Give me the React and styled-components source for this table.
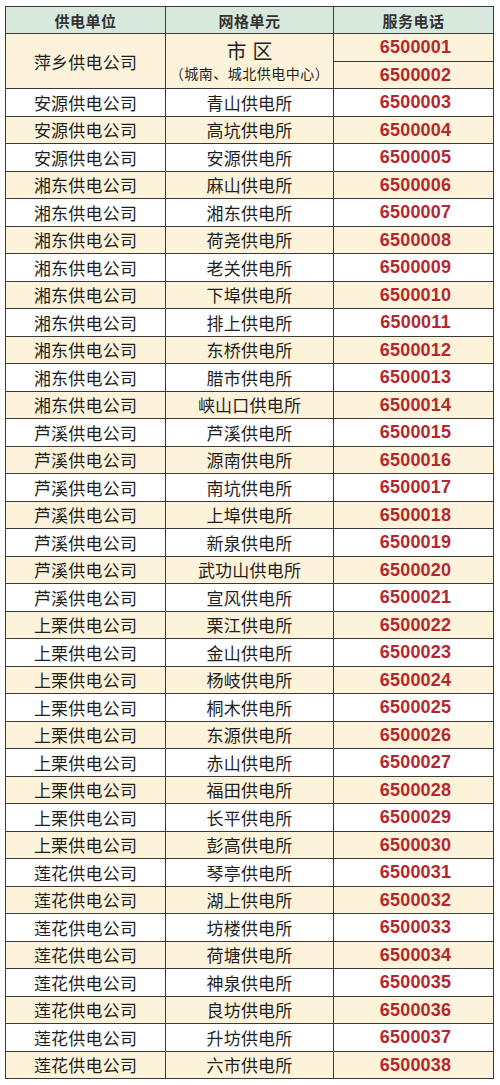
import React from 'react';
import styled, { createGlobalStyle } from 'styled-components';

const GlobalStyle = createGlobalStyle`
  html, body {
    margin: 0;
    padding: 0;
    background: #ffffff;
  }
  body {
    font-family: "Noto Sans CJK SC", "Noto Sans", sans-serif;
  }
`;

const Page = styled.div`
  width: 500px;
  padding: 6px 7px 7px 5px;
  box-sizing: border-box;
`;

const Table = styled.table`
  width: 488px;
  border-collapse: collapse;
  table-layout: fixed;
  border: 1.5px solid #3a3a3a;
`;

const HeadCell = styled.th`
  height: 26px;
  padding: 0;
  background: #d7e8dc;
  border: 1.5px solid #3a3a3a;
  font-size: 15px;
  font-weight: 700;
  letter-spacing: 0.5px;
  color: #333333;
  text-align: center;
  vertical-align: middle;
`;

const Row = styled.tr`
  background: ${({ $cream }) => ($cream ? '#fcf3da' : '#ffffff')};
`;

const Cell = styled.td`
  height: 26.5px;
  padding: 0;
  border: 1px solid #3a3a3a;
  font-size: 17px;
  letter-spacing: 0.2px;
  color: #1f1f1f;
  text-align: center;
  vertical-align: middle;
  line-height: 1;
`;

const Phone = styled(Cell)`
  padding-left: 4px;
  font-family: "Liberation Sans", Arial, sans-serif;
  font-weight: 700;
  font-size: 18px;
  color: #b5272f;
  letter-spacing: 0.2px;
`;

const DistrictMain = styled.div`
  font-size: 20px;
  letter-spacing: 6px;
  padding-left: 6px;
  line-height: 24px;
`;

const DistrictSub = styled.div`
  font-size: 14px;
  line-height: 20px;
  letter-spacing: 0.5px;
`;

const rows = [
  ['安源供电公司', '青山供电所'],
  ['安源供电公司', '高坑供电所'],
  ['安源供电公司', '安源供电所'],
  ['湘东供电公司', '麻山供电所'],
  ['湘东供电公司', '湘东供电所'],
  ['湘东供电公司', '荷尧供电所'],
  ['湘东供电公司', '老关供电所'],
  ['湘东供电公司', '下埠供电所'],
  ['湘东供电公司', '排上供电所'],
  ['湘东供电公司', '东桥供电所'],
  ['湘东供电公司', '腊市供电所'],
  ['湘东供电公司', '峡山口供电所'],
  ['芦溪供电公司', '芦溪供电所'],
  ['芦溪供电公司', '源南供电所'],
  ['芦溪供电公司', '南坑供电所'],
  ['芦溪供电公司', '上埠供电所'],
  ['芦溪供电公司', '新泉供电所'],
  ['芦溪供电公司', '武功山供电所'],
  ['芦溪供电公司', '宣风供电所'],
  ['上栗供电公司', '栗江供电所'],
  ['上栗供电公司', '金山供电所'],
  ['上栗供电公司', '杨岐供电所'],
  ['上栗供电公司', '桐木供电所'],
  ['上栗供电公司', '东源供电所'],
  ['上栗供电公司', '赤山供电所'],
  ['上栗供电公司', '福田供电所'],
  ['上栗供电公司', '长平供电所'],
  ['上栗供电公司', '彭高供电所'],
  ['莲花供电公司', '琴亭供电所'],
  ['莲花供电公司', '湖上供电所'],
  ['莲花供电公司', '坊楼供电所'],
  ['莲花供电公司', '荷塘供电所'],
  ['莲花供电公司', '神泉供电所'],
  ['莲花供电公司', '良坊供电所'],
  ['莲花供电公司', '升坊供电所'],
  ['莲花供电公司', '六市供电所'],
];

const phone = (n) => `65000${String(n).padStart(2, '0')}`;

export default function App() {
  return (
    <Page>
      <GlobalStyle />
      <Table>
        <colgroup>
          <col style={{ width: '160px' }} />
          <col style={{ width: '168px' }} />
          <col style={{ width: '160px' }} />
        </colgroup>
        <thead>
          <tr>
            <HeadCell>供电单位</HeadCell>
            <HeadCell>网格单元</HeadCell>
            <HeadCell>服务电话</HeadCell>
          </tr>
        </thead>
        <tbody>
          <Row $cream>
            <Cell rowSpan={2}>萍乡供电公司</Cell>
            <Cell rowSpan={2}>
              <DistrictMain>市区</DistrictMain>
              <DistrictSub>（城南、城北供电中心）</DistrictSub>
            </Cell>
            <Phone>{phone(1)}</Phone>
          </Row>
          <Row $cream>
            <Phone>{phone(2)}</Phone>
          </Row>
          {rows.map(([company, unit], i) => (
            <Row key={unit} $cream={i % 2 === 1}>
              <Cell>{company}</Cell>
              <Cell>{unit}</Cell>
              <Phone>{phone(i + 3)}</Phone>
            </Row>
          ))}
        </tbody>
      </Table>
    </Page>
  );
}
